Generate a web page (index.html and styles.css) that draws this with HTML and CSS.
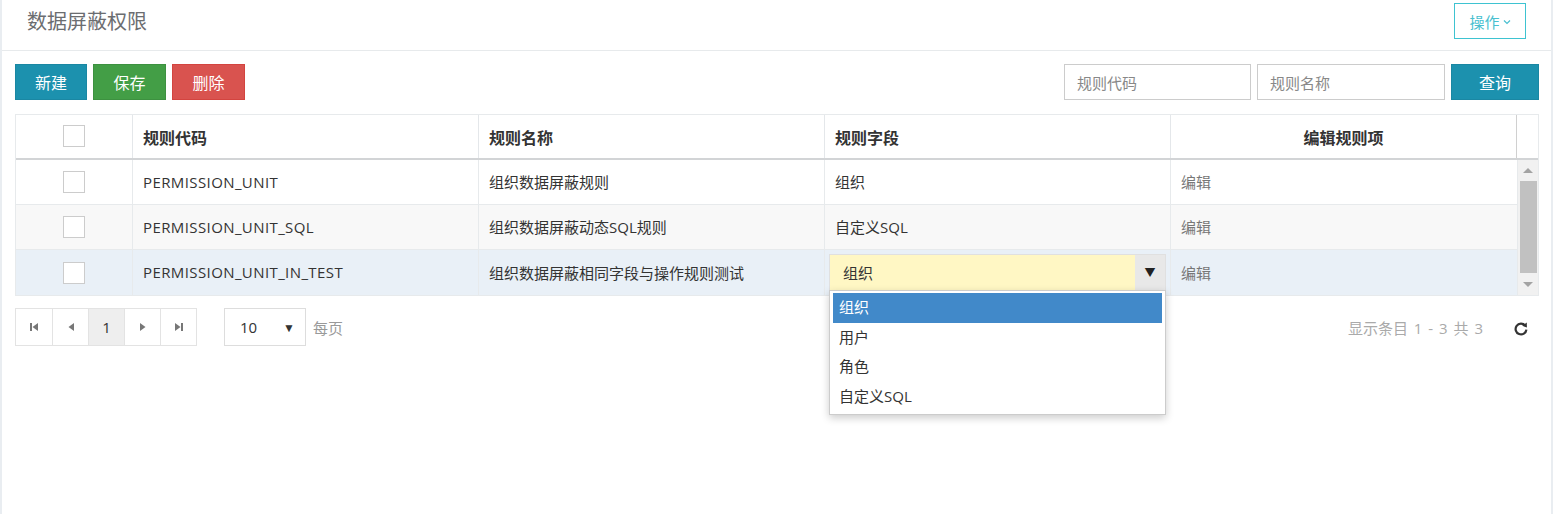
FILE: index.html
```html
<!DOCTYPE html>
<html lang="zh-CN">
<head>
<meta charset="utf-8">
<title>数据屏蔽权限</title>
<link rel="stylesheet" href="styles.css">
</head>
<body>
<div class="panel">
  <div class="panel-head">
    <h1 class="title">数据屏蔽权限</h1>
    <button class="btn-op">操作 <svg class="caret" width="8" height="6" viewBox="0 0 8 6"><path d="M1 1.5 L4 4.5 L7 1.5" fill="none" stroke="currentColor" stroke-width="1.2"/></svg></button>
  </div>
  <div class="panel-body">
    <div class="toolbar">
      <div class="btns">
        <button class="btn btn-blue">新建</button>
        <button class="btn btn-green">保存</button>
        <button class="btn btn-red">删除</button>
      </div>
      <div class="search">
        <input class="inp inp1" placeholder="规则代码">
        <input class="inp inp2" placeholder="规则名称">
        <button class="btn btn-blue btn-query">查询</button>
      </div>
    </div>

    <div class="grid">
      <div class="grid-head">
        <div class="c c-chk"><span class="chk"></span></div>
        <div class="c">规则代码</div>
        <div class="c">规则名称</div>
        <div class="c">规则字段</div>
        <div class="c c-center">编辑规则项</div>
        <div class="c c-sb"></div>
      </div>
      <div class="grid-body">
        <div class="rows">
          <div class="row">
            <div class="c c-chk"><span class="chk"></span></div>
            <div class="c c-code">PERMISSION_UNIT</div>
            <div class="c">组织数据屏蔽规则</div>
            <div class="c">组织</div>
            <div class="c c-edit">编辑</div>
          </div>
          <div class="row row-alt">
            <div class="c c-chk"><span class="chk"></span></div>
            <div class="c c-code">PERMISSION_UNIT_SQL</div>
            <div class="c">组织数据屏蔽动态SQL规则</div>
            <div class="c">自定义SQL</div>
            <div class="c c-edit">编辑</div>
          </div>
          <div class="row row-sel">
            <div class="c c-chk"><span class="chk"></span></div>
            <div class="c c-code">PERMISSION_UNIT_IN_TEST</div>
            <div class="c">组织数据屏蔽相同字段与操作规则测试</div>
            <div class="c c-editor">
              <div class="combo">
                <span class="combo-text">组织</span>
                <span class="combo-arrow">▼</span>
              </div>
              <ul class="combo-list">
                <li class="on">组织</li>
                <li>用户</li>
                <li>角色</li>
                <li>自定义SQL</li>
              </ul>
            </div>
            <div class="c c-edit">编辑</div>
          </div>
        </div>
        <div class="scrollbar">
          <span class="sb-btn"><span class="sb-up"></span></span>
          <span class="sb-thumb"></span>
          <span class="sb-btn sb-btn-b"><span class="sb-down"></span></span>
        </div>
      </div>
    </div>

    <div class="pager">
      <div class="pages">
        <span class="pg"><svg width="10" height="10" viewBox="0 0 10 10"><rect x="1" y="1" width="2" height="8" fill="#777"/><path d="M9 1 L3.5 5 L9 9 Z" fill="#777"/></svg></span>
        <span class="pg"><svg width="10" height="10" viewBox="0 0 10 10"><path d="M8 1 L2.5 5 L8 9 Z" fill="#777"/></svg></span>
        <span class="pg pg-on">1</span>
        <span class="pg"><svg width="10" height="10" viewBox="0 0 10 10"><path d="M2 1 L7.5 5 L2 9 Z" fill="#777"/></svg></span>
        <span class="pg"><svg width="10" height="10" viewBox="0 0 10 10"><path d="M1 1 L6.5 5 L1 9 Z" fill="#777"/><rect x="7" y="1" width="2" height="8" fill="#777"/></svg></span>
      </div>
      <div class="size">
        <span>10</span><span class="size-arrow">▼</span>
      </div>
      <span class="per">每页</span>
      <span class="info">显示条目 1 - 3 共 3</span>
      <svg class="refresh" width="16" height="16" viewBox="0 0 16 16"><path d="M12.2 4.6 A5.4 5.4 0 1 0 13.4 8.6" fill="none" stroke="#333" stroke-width="2.2"/><path d="M9.2 4.8 L13.8 1.6 L13.9 6.6 Z" fill="#333"/></svg>
    </div>
  </div>
</div>
</body>
</html>
```

FILE: styles.css
```css
* { box-sizing: border-box; }
html, body { margin: 0; padding: 0; }
body {
  background: #e9edf1;
  font-family: "Noto Sans CJK SC", "Open Sans", sans-serif;
  font-size: 14px;
  color: #333;
  height: 514px;
  overflow: hidden;
}
.panel {
  margin-left: 2px;
  width: 1549px;
  height: 514px;
  background: #fff;
}
.panel-head {
  display: flex;
  justify-content: space-between;
  align-items: flex-start;
  padding: 3px 25px 11px 25px;
  border-bottom: 1px solid #e7eaec;
}
.title {
  margin: 0;
  font-size: 20px;
  font-weight: normal;
  color: #6b6d70;
  line-height: 36px;
}
.btn-op {
  height: 36px;
  width: 72px;
  background: #fff;
  border: 1px solid #3ec3d1;
  color: #49bfd0;
  font-family: inherit;
  font-size: 15px;
  padding: 0;
  display: flex;
  align-items: center;
  justify-content: center;
  gap: 3px;
}
.caret { margin-top: 1px; }
.panel-body { padding: 13px 12px 0 13px; }
.toolbar {
  display: flex;
  justify-content: space-between;
  height: 36px;
}
.btns, .search { display: flex; gap: 6px; }
.btn {
  height: 36px;
  width: 73px;
  border: 1px solid transparent;
  color: #fff;
  font-family: inherit;
  font-size: 16px;
  padding: 0;
}
.btns .btn-blue { width: 72px; }
.btn-blue { background: #1c91ae; border-color: #1a87a3; }
.btn-green { background: #439e46; border-color: #3d9140; }
.btn-red { background: #d9534f; border-color: #d3443f; }
.btn-query { width: 88px; }
.inp {
  height: 36px;
  border: 1px solid #ccc;
  padding: 0 12px;
  font-family: inherit;
  font-size: 15px;
  color: #333;
  outline: none;
}
.inp::placeholder { color: #888; }
.inp1 { width: 187px; }
.inp2 { width: 188px; }

.grid {
  margin-top: 14px;
  border: 1px solid #e7eaec;
  width: 1524px;
}
.grid-head, .row {
  display: grid;
  grid-template-columns: 117px 346px 346px 346px 346px;
}
.grid-head {
  grid-template-columns: 117px 346px 346px 346px 346px 1fr;
  height: 45px;
  border-bottom: 2px solid #d2d4d6;
  font-weight: bold;
  font-size: 16px;
  color: #333;
}
.c {
  display: flex;
  align-items: center;
  padding: 0 10px;
  border-right: 1px solid #e7eaec;
  white-space: nowrap;
}
.grid-head .c { border-right-color: #e4e7ea; }
.grid-head .c-sb { border-right: none; border-left: 1px solid #d0d0d0; margin-left: -1px; }
.c-center { justify-content: center; }
.c-chk { justify-content: center; padding: 0; }
.grid-head .c-chk { align-items: flex-start; padding-top: 10px; }
.chk {
  width: 22px;
  height: 22px;
  border: 1px solid #ccc;
  background: #fff;
  display: block;
}
.grid-body { display: flex; }
.rows { width: 1501px; }
.row {
  height: 45px;
  border-bottom: 1px solid #e7eaec;
  background: #fff;
  font-size: 15px;
  color: #333;
}
.row .c { font-family: "Open Sans", "Noto Sans CJK SC", sans-serif; padding-bottom: 1px; }
.row .c-chk { padding-bottom: 0; }
.row .c-code { letter-spacing: 0.4px; }
.row:last-child { border-bottom: none; }
.row-alt { background: #f8f8f8; }
.row-sel { background: #e9f0f7; }
.c-edit { color: #777; padding-left: 10px; border-right: none; }
.row .c-editor { position: relative; padding: 0 4px 0 4px; }
.combo {
  display: flex;
  width: 337px;
  height: 37px;
  border: 1px solid #e0e0e0;
  background: #fff7c4;
  margin-top: -1px;
}
.combo-text { flex: 1; display: flex; align-items: center; padding-left: 13px; color: #333; }
.combo-arrow {
  width: 30px;
  background: #e8e8e8;
  display: flex;
  align-items: center;
  justify-content: center;
  font-size: 11px;
  color: #222;
}
.combo-list {
  position: absolute;
  left: 4px;
  top: 40px;
  width: 337px;
  margin: 0;
  padding: 2px 3px 3px;
  list-style: none;
  background: #fff;
  border: 1px solid #ccc;
  box-shadow: 0 3px 8px rgba(0, 0, 0, 0.2);
  z-index: 10;
}
.combo-list li {
  height: 29.5px;
  line-height: 29.5px;
  padding-left: 6px;
  color: #333;
}
.combo-list li.on { background: #4189c9; color: #fff; }

.scrollbar {
  width: 22px;
  background: #f1f1f1;
  display: flex;
  flex-direction: column;
  align-items: center;
  border-left: 1px solid #e7eaec;
}
.sb-btn {
  height: 21px;
  display: flex;
  align-items: center;
  justify-content: center;
}
.sb-btn-b { height: 22px; }
.sb-up, .sb-down {
  width: 0; height: 0;
  border-left: 5px solid transparent;
  border-right: 5px solid transparent;
}
.sb-up { border-bottom: 5px solid #a3a3a3; }
.sb-down { border-top: 5px solid #a3a3a3; }
.sb-thumb { width: 17px; flex: 1; background: #c1c1c1; }

.pager {
  margin-top: 12px;
  display: flex;
  align-items: center;
  height: 38px;
}
.pages { display: flex; border: 1px solid #e3e3e3; }
.pg {
  width: 36px;
  height: 36px;
  display: flex;
  align-items: center;
  justify-content: center;
  border-left: 1px solid #e3e3e3;
  font-family: "Open Sans", sans-serif;
  font-size: 15px;
  color: #333;
}
.pg:first-child { border-left: none; }
.pg-on { background: #eee; }
.size {
  margin-left: 27px;
  width: 82px;
  height: 38px;
  border: 1px solid #ddd;
  display: flex;
  align-items: center;
  justify-content: space-between;
  padding: 0 10px 0 15px;
  font-family: "Open Sans", sans-serif;
  font-size: 15px;
  color: #333;
}
.size-arrow { font-size: 12px; color: #333; }
.per { margin-left: 7px; color: #999; font-size: 15px; }
.info {
  margin-left: auto;
  color: #aaa;
  margin-right: 30px;
  font-size: 15px;
  font-family: "Open Sans", "Noto Sans CJK SC", sans-serif;
  word-spacing: 2px;
}
.refresh { margin-right: 10px; margin-top: 4px; }
```
